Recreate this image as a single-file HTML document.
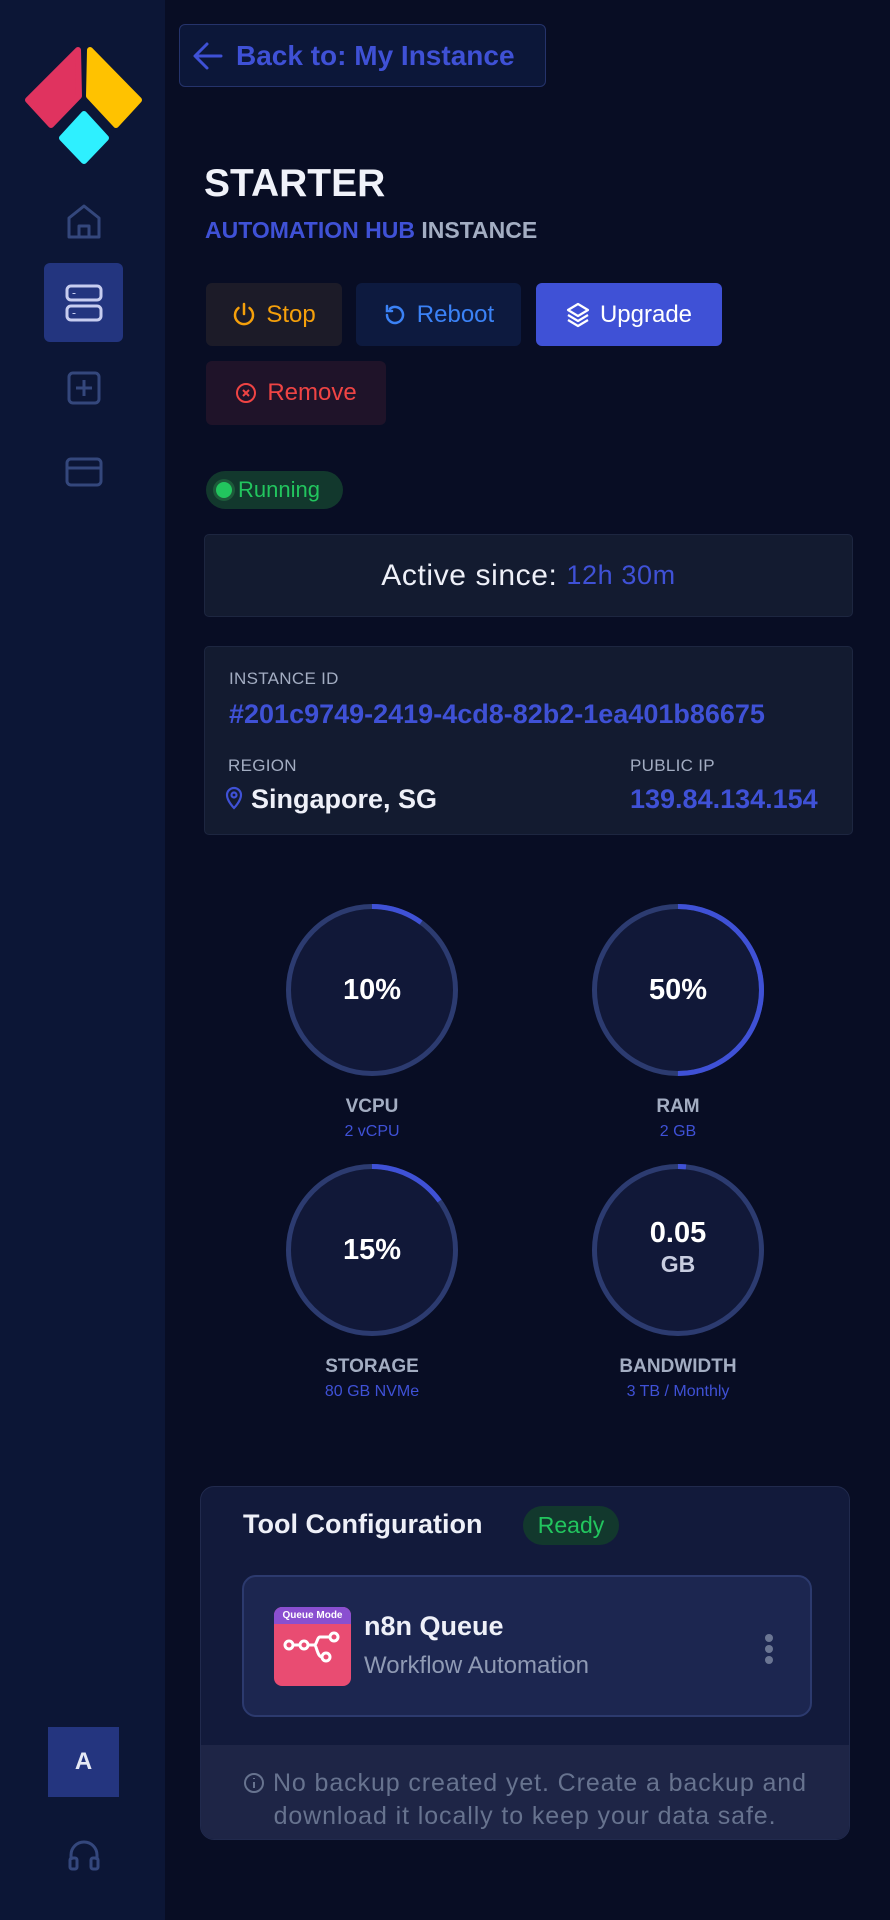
<!DOCTYPE html>
<html><head><meta charset="utf-8"><style>
*{margin:0;padding:0;box-sizing:border-box}
body{width:890px;height:1920px;background:#080d24;font-family:"Liberation Sans",sans-serif;position:relative;overflow:hidden;color:#fff}
.abs{position:absolute}
.side{left:0;top:0;width:165px;height:1920px;background:#0c1636}
.btn{position:absolute;border-radius:6px;display:flex;align-items:center;justify-content:center;font-size:24px;gap:10px}
.lbl{font-size:17px;color:#a3adc2;letter-spacing:.3px}
.ring{position:absolute;width:180px;text-align:center}
.ring .t{position:absolute;left:0;width:180px;top:74px;font-size:29px;text-align:center;font-weight:bold}
.ring .n{position:absolute;left:0;width:180px;top:196px;font-size:19px;color:#a3adc2;font-weight:bold}
.ring .s{position:absolute;left:0;width:180px;top:223px;font-size:16px;color:#3f51d6}
</style></head><body>
<div class="abs side"></div>
<svg class="abs" style="left:0;top:0" width="165" height="170" viewBox="0 0 165 170">
<polygon points="78,50 79,96 51,125 28,100" fill="#e0335f" stroke="#e0335f" stroke-width="6" stroke-linejoin="round"/>
<polygon points="90,50 139,100 116,125 89,96" fill="#ffc200" stroke="#ffc200" stroke-width="6" stroke-linejoin="round"/>
<polygon points="84,114 106,138 84,161 62,138" fill="#2ef0ff" stroke="#2ef0ff" stroke-width="6" stroke-linejoin="round"/>
</svg>
<svg class="abs" style="left:66px;top:203px" width="36" height="38" viewBox="0 0 36 38" fill="none" stroke="#34477c" stroke-width="3" stroke-linejoin="round"><path d="M3 15 18 3 33 15V34H3Z"/><path d="M13 34V23H23V34"/></svg>
<div class="abs" style="left:44px;top:263px;width:79px;height:79px;background:#23357f;border-radius:6px"></div>
<svg class="abs" style="left:64px;top:283px" width="40" height="40" viewBox="0 0 40 40" fill="none" stroke="#c7cdf0" stroke-width="3"><rect x="3" y="3" width="34" height="14" rx="4"/><rect x="3" y="23" width="34" height="14" rx="4"/><path d="M10 10v1M10 30v1"/></svg>
<svg class="abs" style="left:66px;top:370px" width="36" height="36" viewBox="0 0 36 36" fill="none" stroke="#34477c" stroke-width="3"><rect x="3" y="3" width="30" height="30" rx="4"/><path d="M18 10v16M10 18h16"/></svg>
<svg class="abs" style="left:64px;top:456px" width="40" height="32" viewBox="0 0 40 32" fill="none" stroke="#34477c" stroke-width="3"><rect x="3" y="3" width="34" height="26" rx="4"/><path d="M3 12h34"/></svg>
<div class="abs" style="left:48px;top:1727px;width:71px;height:70px;background:#24357f;color:#e6e9f5;font-size:24px;font-weight:bold;display:flex;align-items:center;justify-content:center">A</div>
<svg class="abs" style="left:67px;top:1838px" width="34" height="34" viewBox="0 0 34 34" fill="none" stroke="#34477c" stroke-width="3"><path d="M4 22V17a13 13 0 0 1 26 0v5"/><rect x="3" y="20" width="7" height="11" rx="2"/><rect x="24" y="20" width="7" height="11" rx="2"/></svg>

<div class="abs" style="left:179px;top:24px;width:367px;height:63px;border:1.5px solid #25336b;background:#0c1739;border-radius:6px;display:flex;align-items:center;padding-left:12px;gap:12px;color:#3f51d6;font-size:28px;font-weight:bold">
<svg width="32" height="32" viewBox="0 0 32 32" fill="none" stroke="#3f51d6" stroke-width="3" stroke-linecap="round" stroke-linejoin="round"><path d="M29 16H4M15 4 3 16l12 12"/></svg>Back to: My Instance</div>

<div class="abs" style="left:204px;top:162px;font-size:39px;font-weight:bold;color:#f0f2fa">STARTER</div>
<div class="abs" style="left:205px;top:217px;font-size:23px;font-weight:bold;color:#3f51d6">AUTOMATION HUB <span style="color:#a3adc2">INSTANCE</span></div>

<div class="btn" style="left:206px;top:283px;width:136px;height:63px;background:#1c1b28;color:#f5a00b">
<svg width="24" height="26" viewBox="0 0 24 26" fill="none" stroke="#f5a00b" stroke-width="2.5" stroke-linecap="round"><path d="M12 2v10M6.5 6a9 9 0 1 0 11 0"/></svg>Stop</div>
<div class="btn" style="left:356px;top:283px;width:165px;height:63px;background:#0d1a3f;color:#3b82f6">
<svg width="24" height="24" viewBox="0 0 24 24" fill="none" stroke="#3b82f6" stroke-width="2.5" stroke-linecap="round"><path d="M4 12a8 8 0 1 0 3-6.3M4 3v5h5"/></svg>Reboot</div>
<div class="btn" style="left:536px;top:283px;width:186px;height:63px;background:#3f51d6;color:#fff">
<svg width="24" height="26" viewBox="0 0 24 26" fill="none" stroke="#fff" stroke-width="2.2" stroke-linejoin="round"><path d="M12 2 22 8 12 14 2 8Z"/><path d="M2 13l10 6 10-6M2 18l10 6 10-6"/></svg>Upgrade</div>
<div class="btn" style="left:206px;top:361px;width:180px;height:64px;background:#1f1329;color:#ef4444">
<svg width="22" height="22" viewBox="0 0 22 22" fill="none" stroke="#ef4444" stroke-width="2"><circle cx="11" cy="11" r="9"/><path d="M8 8l6 6M14 8l-6 6"/></svg>Remove</div>

<div class="abs" style="left:206px;top:471px;width:137px;height:38px;border-radius:19px;background:#12382d;display:flex;align-items:center;padding-left:10px;gap:6px;color:#22c55e;font-size:22px">
<span style="width:16px;height:16px;border-radius:50%;background:#22c55e;box-shadow:0 0 0 3px #1d5a3a"></span>Running</div>

<div class="abs" style="left:204px;top:534px;width:649px;height:83px;background:#131b30;border:1px solid #1d2640;border-radius:5px;display:flex;align-items:center;justify-content:center;font-size:30px;color:#eef0f8;letter-spacing:.6px">Active since:&nbsp;<span style="color:#3f51d6;font-size:27px">12h 30m</span></div>

<div class="abs" style="left:204px;top:646px;width:649px;height:189px;background:#131b30;border:1px solid #1d2640;border-radius:5px"></div>
<div class="abs lbl" style="left:229px;top:669px">INSTANCE ID</div>
<div class="abs" style="left:229px;top:699px;font-size:27px;color:#3f51d6;font-weight:bold">#201c9749-2419-4cd8-82b2-1ea401b86675</div>
<div class="abs lbl" style="left:228px;top:756px">REGION</div>
<div class="abs lbl" style="left:630px;top:756px">PUBLIC IP</div>
<svg class="abs" style="left:225px;top:786px" width="18" height="24" viewBox="0 0 18 24" fill="none" stroke="#3f51d6" stroke-width="2.2"><path d="M9 22s7-7 7-13A7 7 0 0 0 2 9c0 6 7 13 7 13Z"/><circle cx="9" cy="9" r="2.5"/></svg>
<div class="abs" style="left:251px;top:784px;font-size:27px;color:#eef0f8;font-weight:bold">Singapore, SG</div>
<div class="abs" style="left:630px;top:784px;font-size:27px;color:#3f51d6;font-weight:bold">139.84.134.154</div>

<div class="ring" style="left:282px;top:900px;height:260px">
<svg width="180" height="180" viewBox="0 0 180 180"><circle cx="90" cy="90" r="83.5" fill="#111838" stroke="#2c3b70" stroke-width="5"/><circle cx="90" cy="90" r="83.5" fill="none" stroke="#3f51d6" stroke-width="5" stroke-dasharray="52.5 600" transform="rotate(-90 90 90)"/></svg>
<div class="t">10%</div><div class="n">VCPU</div><div class="s">2 vCPU</div></div>
<div class="ring" style="left:588px;top:900px;height:260px">
<svg width="180" height="180" viewBox="0 0 180 180"><circle cx="90" cy="90" r="83.5" fill="#111838" stroke="#2c3b70" stroke-width="5"/><circle cx="90" cy="90" r="83.5" fill="none" stroke="#3f51d6" stroke-width="5" stroke-dasharray="262.3 600" transform="rotate(-90 90 90)"/></svg>
<div class="t">50%</div><div class="n">RAM</div><div class="s">2 GB</div></div>
<div class="ring" style="left:282px;top:1160px;height:260px">
<svg width="180" height="180" viewBox="0 0 180 180"><circle cx="90" cy="90" r="83.5" fill="#111838" stroke="#2c3b70" stroke-width="5"/><circle cx="90" cy="90" r="83.5" fill="none" stroke="#3f51d6" stroke-width="5" stroke-dasharray="78.7 600" transform="rotate(-90 90 90)"/></svg>
<div class="t">15%</div><div class="n">STORAGE</div><div class="s">80 GB NVMe</div></div>
<div class="ring" style="left:588px;top:1160px;height:260px">
<svg width="180" height="180" viewBox="0 0 180 180"><circle cx="90" cy="90" r="83.5" fill="#111838" stroke="#2c3b70" stroke-width="5"/><circle cx="90" cy="90" r="83.5" fill="none" stroke="#3f51d6" stroke-width="5" stroke-dasharray="8 600" transform="rotate(-90 90 90)"/></svg>
<div class="t" style="top:58px;line-height:30px;font-weight:bold">0.05<br><span style="font-size:23px;color:#c8cde0">GB</span></div><div class="n">BANDWIDTH</div><div class="s">3 TB / Monthly</div></div>

<div class="abs" style="left:200px;top:1486px;width:650px;height:354px;background:#121a3b;border:1px solid #212a4d;border-radius:14px;overflow:hidden">
<div class="abs" style="left:0;top:258px;width:650px;height:96px;background:#1e2546"></div>
</div>
<div class="abs" style="left:243px;top:1509px;font-size:27px;color:#eef0f8;font-weight:bold">Tool Configuration</div>
<div class="abs" style="left:523px;top:1506px;width:96px;height:39px;border-radius:20px;background:#12382d;color:#22c55e;font-size:23px;display:flex;align-items:center;justify-content:center">Ready</div>
<div class="abs" style="left:242px;top:1575px;width:570px;height:142px;background:#1c2650;border:2px solid #2c3a6e;border-radius:14px"></div>
<div class="abs" style="left:274px;top:1607px;width:77px;height:79px;border-radius:8px;background:#e94c72;overflow:hidden">
<div style="height:17px;background:#8a4fd0;color:#fff;font-size:10px;font-weight:bold;text-align:center;line-height:17px">Queue Mode</div>
<svg width="77" height="60" viewBox="0 0 77 60" fill="none" stroke="#fff" stroke-width="3"><circle cx="15" cy="21" r="4"/><circle cx="30" cy="21" r="4"/><circle cx="60" cy="13" r="4"/><circle cx="52" cy="33" r="4"/><path d="M19 21h7M34 21h6c3 0 3-8 6-8h10M40 21c3 0 3 12 8 12"/></svg></div>
<div class="abs" style="left:364px;top:1611px;font-size:27px;color:#eef0f8;font-weight:bold">n8n Queue</div>
<div class="abs" style="left:364px;top:1652px;font-size:24px;color:#8f9ab4">Workflow Automation</div>
<div class="abs" style="left:765px;top:1634px;width:8px">
<div style="width:8px;height:8px;border-radius:50%;background:#6b7693;margin-bottom:3px"></div><div style="width:8px;height:8px;border-radius:50%;background:#6b7693;margin-bottom:3px"></div><div style="width:8px;height:8px;border-radius:50%;background:#6b7693"></div></div>
<div class="abs" style="left:205px;top:1767px;width:640px;text-align:center;font-size:25px;line-height:33px;color:#67738f;letter-spacing:.9px">
<svg width="22" height="22" viewBox="0 0 22 22" fill="none" stroke="#67738f" stroke-width="2" style="vertical-align:-3px"><circle cx="11" cy="11" r="9"/><path d="M11 10v6M11 6v1"/></svg> No backup created yet. Create a backup and<br>download it locally to keep your data safe.</div>
</body></html>
